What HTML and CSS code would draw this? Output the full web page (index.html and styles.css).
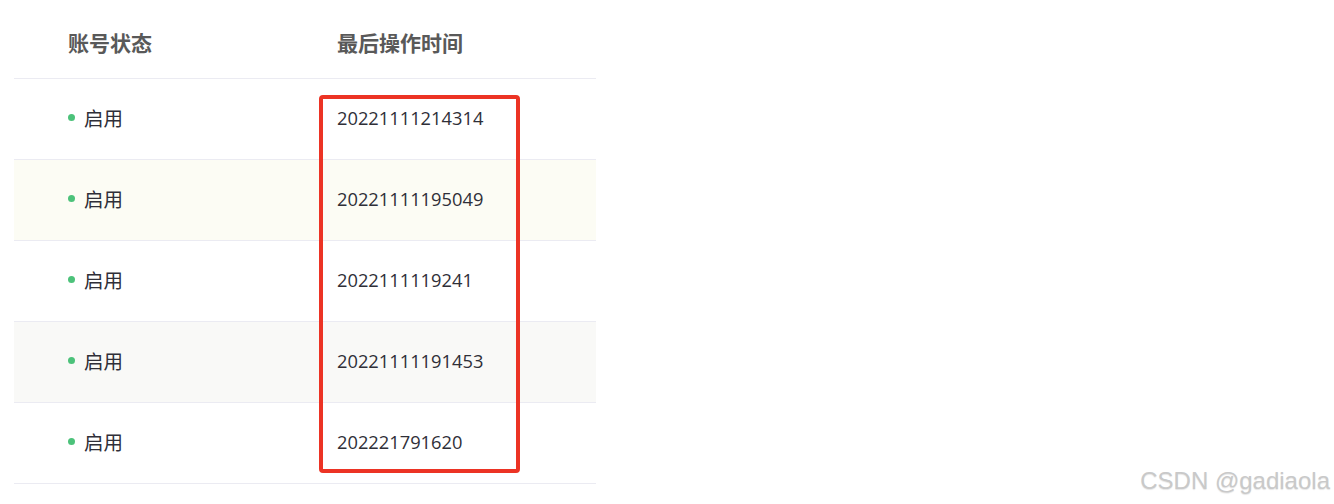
FILE: index.html
```html
<!DOCTYPE html>
<html lang="zh-CN">
<head>
<meta charset="utf-8">
<title>账号列表</title>
<link rel="stylesheet" href="styles.css">
</head>
<body>
<div class="page">
  <div class="table">
    <div class="row head">
      <div class="cell">账号状态</div>
      <div class="cell">最后操作时间</div>
    </div>
    <div class="row">
      <div class="cell"><span class="dot"></span>启用</div>
      <div class="cell num">20221111214314</div>
    </div>
    <div class="row alt-yellow">
      <div class="cell"><span class="dot"></span>启用</div>
      <div class="cell num">20221111195049</div>
    </div>
    <div class="row">
      <div class="cell"><span class="dot"></span>启用</div>
      <div class="cell num">2022111119241</div>
    </div>
    <div class="row alt-gray">
      <div class="cell"><span class="dot"></span>启用</div>
      <div class="cell num">20221111191453</div>
    </div>
    <div class="row">
      <div class="cell"><span class="dot"></span>启用</div>
      <div class="cell num">202221791620</div>
    </div>
    <div class="highlight"></div>
  </div>
  <div class="watermark">CSDN @gadiaola</div>
</div>
</body>
</html>
```
FILE: styles.css
```css
html, body {
  margin: 0;
  padding: 0;
  background: #ffffff;
}
body {
  font-family: "Open Sans", "Noto Sans CJK SC", sans-serif;
  color: #333333;
}
.page {
  position: relative;
  width: 1334px;
  height: 504px;
  overflow: hidden;
}
.table {
  position: relative;
  margin-left: 14px;
  width: 582px;
}
.row {
  display: grid;
  grid-template-columns: 269px 1fr;
  height: 80px;
  border-bottom: 1px solid #ebebf2;
  align-items: center;
}
.row.head {
  height: 78px;
}
.cell {
  padding-left: 54px;
  padding-bottom: 3px;
  display: flex;
  align-items: center;
  font-size: 19.5px;
  font-family: "Noto Sans CJK SC", sans-serif;
  color: #2f2f38;
}
.cell.num {
  font-family: "Open Sans", "Noto Sans CJK SC", sans-serif;
  font-size: 18.3px;
}
.head .cell {
  font-size: 21px;
  font-weight: 700;
  color: #595959;
  padding-top: 6px;
  padding-bottom: 0;
}
.alt-yellow {
  background: #fcfcf4;
}
.alt-gray {
  background: #f9f9f7;
}
.dot {
  width: 7px;
  height: 7px;
  border-radius: 50%;
  background: #4cc27a;
  margin-right: 9px;
}
.highlight {
  position: absolute;
  left: 305px;
  top: 95px;
  width: 193px;
  height: 370px;
  border: 4px solid #ec3324;
  border-radius: 4px;
}
.watermark {
  position: absolute;
  right: 4px;
  bottom: 9px;
  font-family: "Liberation Sans", sans-serif;
  font-size: 24px;
  color: #c9c9c9;
  text-shadow: 0 1px 1px #e6e6e6;
}
```
